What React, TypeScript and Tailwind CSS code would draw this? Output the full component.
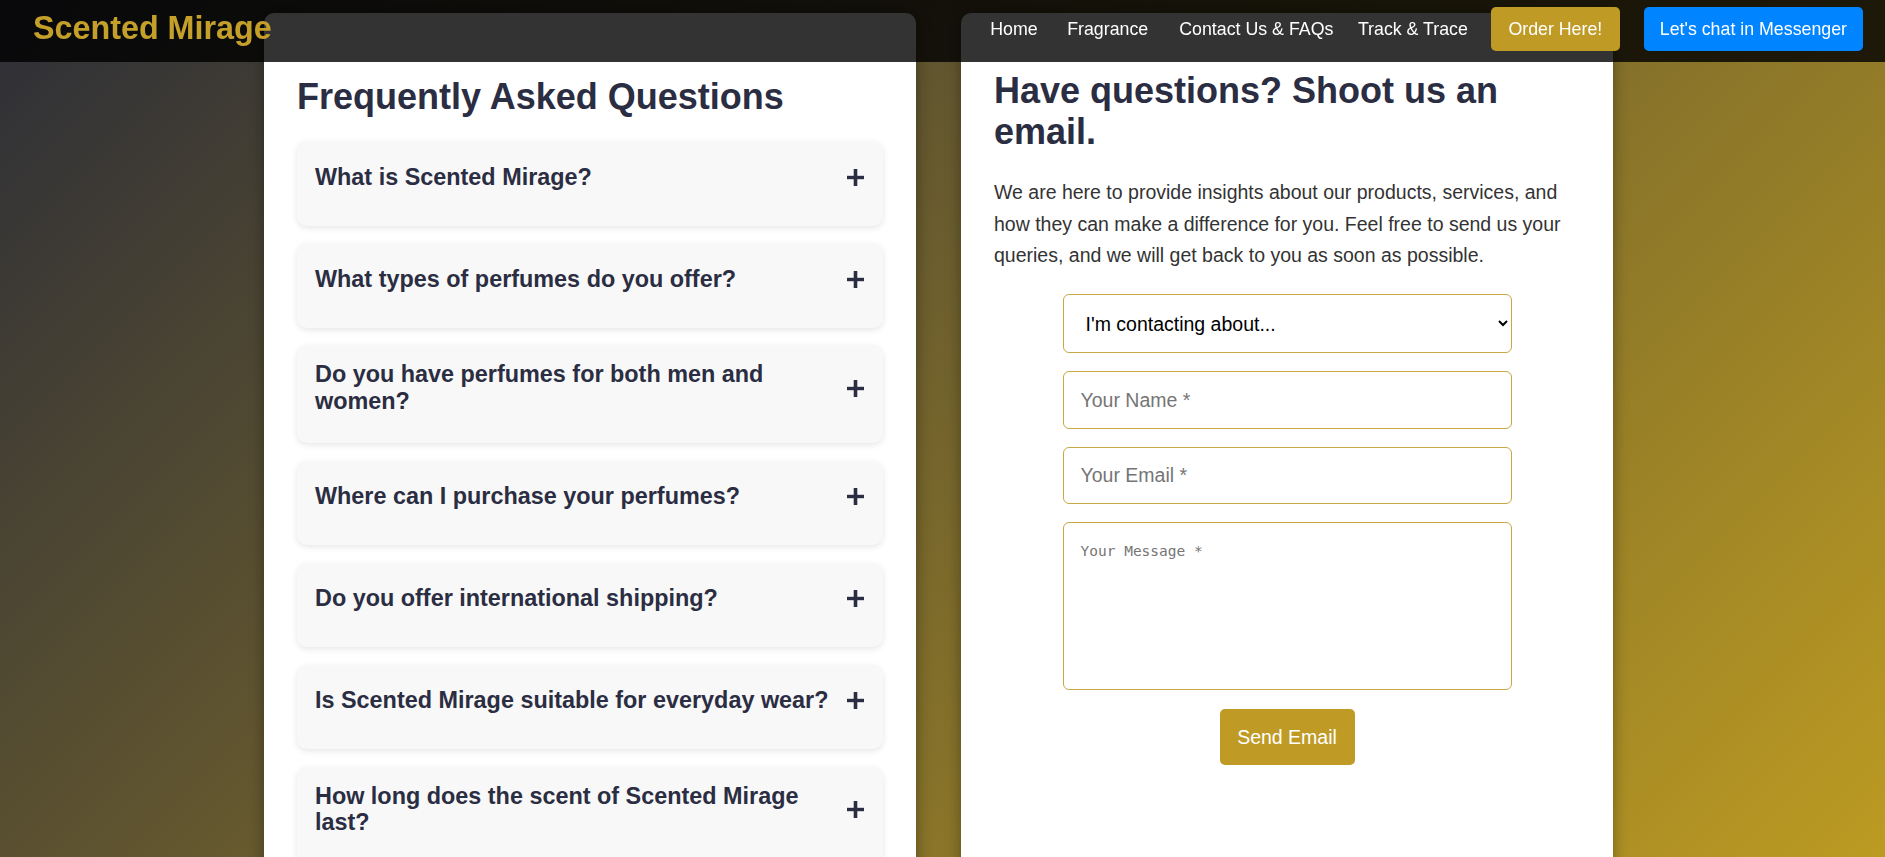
import React, { useState } from 'react';

const faqs = [
    'What is Scented Mirage?',
    'What types of perfumes do you offer?',
    'Do you have perfumes for both men and women?',
    'Where can I purchase your perfumes?',
    'Do you offer international shipping?',
    'Is Scented Mirage suitable for everyday wear?',
    'How long does the scent of Scented Mirage last?',
];

const PlusIcon = () => (
    <svg width="17" height="17" viewBox="0 0 17 17" className="shrink-0">
        <rect x="6.7" y="0" width="3.6" height="17" fill="#2b2d42" />
        <rect x="0" y="6.8" width="17" height="3.4" fill="#2b2d42" />
    </svg>
);

const Header = () => (
    <header className="fixed top-0 inset-x-0 z-10 h-[62px] bg-black/80 flex items-center justify-between pl-[33px] pr-[22px] pt-[7px] pb-[11px]">
        <a href="#" className="text-[32.3px] font-bold text-[#c4a02a] leading-[1.15]">
            Scented Mirage
        </a>
        <nav className="flex items-center text-[17.8px] text-white">
            <a href="#">Home</a>
            <a href="#" className="ml-[29.5px]">Fragrance</a>
            <a href="#" className="ml-[31px]">Contact Us &amp; FAQs</a>
            <a href="#" className="ml-[24.5px]">Track &amp; Trace</a>
            <a href="#" className="ml-[23px] h-[44px] flex items-center px-[17.5px] rounded-[5px] bg-[#bf9b26]">
                Order Here!
            </a>
            <a href="#" className="ml-[24px] h-[44px] flex items-center px-[16px] rounded-[5px] bg-[#0084ff]">
                Let's chat in Messenger
            </a>
        </nav>
    </header>
);

export default function App() {
    const [open, setOpen] = useState<number | null>(null);

    return (
        <div className="relative h-[857px] overflow-hidden bg-[linear-gradient(135deg,#2d2e37,#bc9b22)] font-['Liberation_Sans',Arial,sans-serif]">
            <Header />
            <main className="flex justify-center items-stretch gap-[45px] pt-[13px] pr-[8px]">
                {/* FAQ column */}
                <section className="w-[652px] bg-white rounded-t-[10px] shadow-[0_0_15px_rgba(0,0,0,0.35)] px-[33px] pt-[62.5px] pb-[40px]">
                    <h2 className="text-[36px] font-bold text-[#2b2d42] leading-[1.15] mb-[24.6px]">
                        Frequently Asked Questions
                    </h2>
                    <div className="flex flex-col gap-[17.7px]">
                        {faqs.map((q, idx) => (
                            <div
                                key={idx}
                                className="bg-[#f8f8f8] rounded-[10px] shadow-[0_2px_6px_rgba(0,0,0,0.1)] px-[18px] pt-[16px] pb-[28.2px] cursor-pointer"
                                onClick={() => setOpen(open === idx ? null : idx)}
                            >
                                <div className="flex items-center min-h-[40px]">
                                    <h3 className="flex-1 text-[23.4px] font-bold text-[#2b2d42] leading-[1.15]">{q}</h3>
                                    <div className="ml-[14px] -translate-x-[1px]">
                                        <PlusIcon />
                                    </div>
                                </div>
                            </div>
                        ))}
                    </div>
                </section>

                {/* Contact column */}
                <section className="w-[652px] bg-white rounded-t-[10px] shadow-[0_0_15px_rgba(0,0,0,0.35)] px-[33px] pt-[56.5px] pb-[40px]">
                    <h2 className="text-[36px] font-bold text-[#2b2d42] leading-[1.15] mb-[25px]">
                        Have questions? Shoot us an email.
                    </h2>
                    <p className="text-[19.5px] leading-[31.5px] text-[#333333] mb-[22.5px]">
                        We are here to provide insights about our products, services, and how they can make a difference for you. Feel free to send us your queries, and we will get back to you as soon as possible.
                    </p>
                    <form className="w-[449px] mx-auto flex flex-col gap-[18px]" onSubmit={(e) => e.preventDefault()}>
                        <select
                            defaultValue=""
                            className="h-[59px] w-full border border-[#c9a745] rounded-[6px] pl-[18px] pr-[8px] text-[19.5px] text-black bg-white"
                        >
                            <option value="" disabled>I'm contacting about...</option>
                            <option>Orders</option>
                            <option>Products</option>
                            <option>Other</option>
                        </select>
                        <input
                            type="text"
                            placeholder="Your Name *"
                            className="h-[58px] w-full border border-[#c9a745] rounded-[6px] px-[17px] text-[19.5px] placeholder:text-[#757575]"
                        />
                        <input
                            type="email"
                            placeholder="Your Email *"
                            className="h-[57px] w-full border border-[#c9a745] rounded-[6px] px-[17px] text-[19.5px] placeholder:text-[#757575]"
                        />
                        <textarea
                            placeholder="Your Message *"
                            className="h-[168px] w-full border border-[#c9a745] rounded-[6px] px-[17px] pt-[18px] resize-none font-['DejaVu_Sans_Mono',monospace] text-[14.5px] placeholder:text-[#757575]"
                        />
                        <button
                            type="submit"
                            className="self-center w-[135px] h-[56px] mt-[1px] rounded-[5px] bg-[#bf9b26] text-white text-[19.5px]"
                        >
                            Send Email
                        </button>
                    </form>
                </section>
            </main>
        </div>
    );
}
